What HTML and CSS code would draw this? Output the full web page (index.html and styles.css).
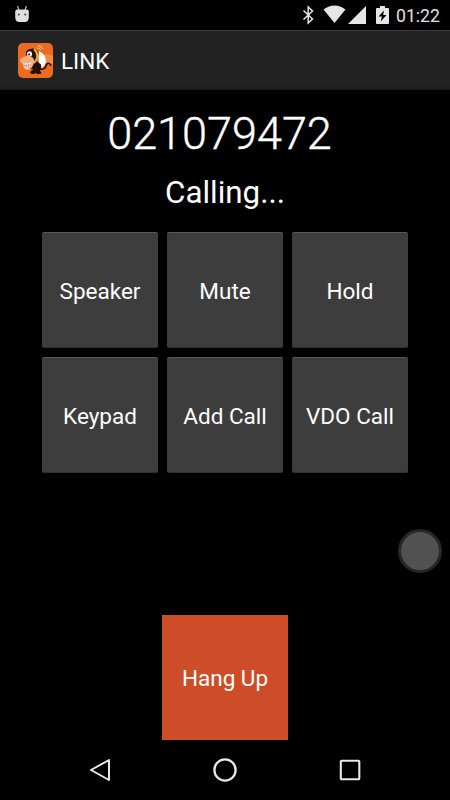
FILE: index.html
```html
<!DOCTYPE html>
<html lang="en">
<head>
    <meta charset="UTF-8">
    <meta name="viewport" content="width=device-width, initial-scale=1.0">
    <title>LINK</title>
    <link rel="stylesheet" href="styles.css">
</head>
<body>
    <div class="status-bar">
        <svg class="icon-droid" width="16" height="18" viewBox="0 0 16 18">
            <path d="M3.500 1l1.500 4M12.500 1L11 5" stroke="#bbb" stroke-width="1.200"/>
            <path d="M3 4.500h10q1.500 0 1.800 2V12q0 5-4 5H5.200q-4 0-4-5V6.500q.3-2 1.800-2z" fill="#dedede"/>
            <circle cx="4.800" cy="9.500" r="1.100" fill="#555"/>
            <circle cx="11.200" cy="9.500" r="1.100" fill="#555"/>
        </svg>
        <div class="status-right">
            <svg class="icon-bluetooth" width="12" height="20" viewBox="0 0 12 20">
                <path d="M1.500 5.500l9 8.500L6.200 18V2l4.300 4-9 8.500" fill="none" stroke="#e6e6e6" stroke-width="1.500"/>
            </svg>
            <svg class="icon-wifi" width="23" height="19" viewBox="0 0 23 19">
                <path d="M.5 4.500Q11.500-3.500 22.500 4.500L11.500 18z" fill="#e6e6e6"/>
            </svg>
            <svg class="icon-signal" width="18" height="18" viewBox="0 0 18 18">
                <path d="M18 0v18H0z" fill="#e6e6e6"/>
            </svg>
            <svg class="icon-battery" width="13" height="19" viewBox="0 0 13 19">
                <path d="M4 0h5v2h3q1 0 1 1v14q0 1-1 1H1q-1 0-1-1V3q0-1 1-1h3z" fill="#e6e6e6"/>
                <path d="M8 4.500L2.500 10.500h3.300L4.800 15.500l5.700-6.500H7.200z" fill="#000"/>
            </svg>
            <span class="clock">01:22</span>
        </div>
    </div>

    <div class="action-bar">
        <svg class="app-icon" width="35" height="35" viewBox="0 0 35 35">
            <rect width="35" height="35" rx="5" fill="#ed6a22"/>
            <path d="M21 14q8-5 14-1v8L24 20z" fill="#f28a42"/>
            <!-- white wing behind the body -->
            <path d="M21 8q6 3 7 9 0 6-6 9-2-8-1-18z" fill="#fff"/>
            <!-- tail -->
            <path d="M21 26q6 1 7-3 1-4 4-2l1 2" fill="none" stroke="#261008" stroke-width="1.500"/>
            <!-- body and legs -->
            <path d="M14 18q5-1 7 2 3 1 2 5l-1 3q2 1 1 3h-4l-1-1q-3 2-6 0l1-2q2-1 2-2l-5-1q0-4 4-7z" fill="#261008"/>
            <!-- head -->
            <path d="M8 12q-1-5 4-6 6-2 8 3 1 5-2 9l-5 2z" fill="#261008"/>
            <path d="M16 6q4 4 3 9-1 3-3 5" fill="none" stroke="#edb92a" stroke-width="2"/>
            <ellipse cx="11.500" cy="11" rx="2.600" ry="2.800" fill="#f4ece4"/>
            <circle cx="11" cy="11.500" r="1" fill="#111"/>
            <!-- snout and teeth -->
            <path d="M2 18q0-3 4-4 4-3 8 0 3 2 2 6-2 6-6 7-5 0-5-6-2 0-3-3z" fill="#eab083"/>
            <path d="M5.500 20q4 1 8-1 0 5-4.500 7-3-1-3.500-6z" fill="#f4ddc9"/>
            <path d="M6 22.500q4 1 7-1M8 21v4M10.500 20.500v4" fill="none" stroke="#b96d50" stroke-width=".5"/>
            <path d="M20 3q3-1 5 3M19 5q3 0 4 2" fill="none" stroke="#ffd2a0"/>
        </svg>
        <span class="app-title">LINK</span>
    </div>

    <div class="call-screen">
        <div class="number">021079472</div>
        <div class="call-state">Calling...</div>

        <div class="button-grid">
            <button class="call-button">Speaker</button>
            <button class="call-button">Mute</button>
            <button class="call-button">Hold</button>
            <button class="call-button">Keypad</button>
            <button class="call-button">Add Call</button>
            <button class="call-button">VDO Call</button>
        </div>

        <button class="hang-up">Hang Up</button>
    </div>

    <div class="nav-bar">
        <svg width="24" height="24" viewBox="0 0 24 24">
            <path d="M21 2v20L3 12z" fill="none" stroke="#e8e8e8" stroke-width="2" stroke-linejoin="round"/>
        </svg>
        <svg width="24" height="24" viewBox="0 0 24 24">
            <circle cx="12" cy="12" r="10.600" fill="none" stroke="#e8e8e8" stroke-width="2.300"/>
        </svg>
        <svg width="24" height="24" viewBox="0 0 24 24">
            <rect x="2.800" y="2.800" width="18.500" height="18.500" rx=".8" fill="none" stroke="#e8e8e8" stroke-width="2.100"/>
        </svg>
    </div>

    <!-- floating touch button -->
    <div class="touch-dot"></div>
</body>
</html>
```
FILE: styles.css
```css
* {
    box-sizing: border-box;
}
body {
    margin: 0;
    height: 800px;
    display: flex;
    flex-direction: column;
    position: relative;
    overflow: hidden;
    background-color: #000;
    color: #fff;
    font-family: Roboto, sans-serif;
}
svg {
    display: block;
    flex: none;
}
button {
    padding: 0;
    border: none;
    color: #fff;
    font-family: inherit;
    font-size: 22.5px;
}
.status-bar {
    height: 30px;
    padding: 0 10px 0 14px;
    display: flex;
    justify-content: space-between;
}
.icon-droid {
    margin-top: 5px;
}
.status-right {
    display: flex;
    align-items: flex-start;
}
.icon-bluetooth {
    margin: 5px 9px 0 0;
}
.icon-wifi {
    margin: 5px 2px 0 0;
}
.icon-signal {
    margin: 6px 10px 0 0;
}
.icon-battery {
    margin: 6px 7px 0 0;
}
.clock {
    font-size: 17.7px;
    line-height: 32px;
    color: #e2e2e2;
}
.action-bar {
    height: 60px;
    padding-left: 18px;
    display: flex;
    align-items: center;
    gap: 8px;
    background: linear-gradient(#222 0, #222 54px, #1b1b1b 60px);
    border-top: 1px solid #3a3a3a;
}
.app-title {
    font-size: 22.5px;
    line-height: 30px;
}
.call-screen {
    height: 650px;
    display: flex;
    flex-direction: column;
    align-items: center;
}
.number {
    margin-top: 17px;
    padding-right: 11px;
    font-size: 45px;
    font-weight: 300;
    line-height: 54px;
    -webkit-text-stroke: 0.4px #fff;
}
.call-state {
    margin-top: 11px;
    font-size: 31.3px;
    line-height: 41px;
}
.button-grid {
    margin-top: 19px;
    display: grid;
    grid-template-columns: repeat(3, 116px);
    grid-auto-rows: 116px;
    gap: 9px;
}
.call-button {
    padding-top: 2px;
    background-color: #3d3d3d;
    border-top: 1px solid #585858;
    border-bottom: 1px solid #303030;
    border-radius: 2px;
}
.hang-up {
    width: 126px;
    height: 125px;
    margin-top: auto;
    background-color: #cd4d29;
}
.nav-bar {
    height: 60px;
    padding: 0 88px;
    display: flex;
    align-items: center;
    justify-content: space-between;
}
.touch-dot {
    position: absolute;
    left: 398px;
    top: 529px;
    width: 44px;
    height: 44px;
    border: 3px solid #262626;
    border-radius: 50%;
    background-color: #515151;
}
```
